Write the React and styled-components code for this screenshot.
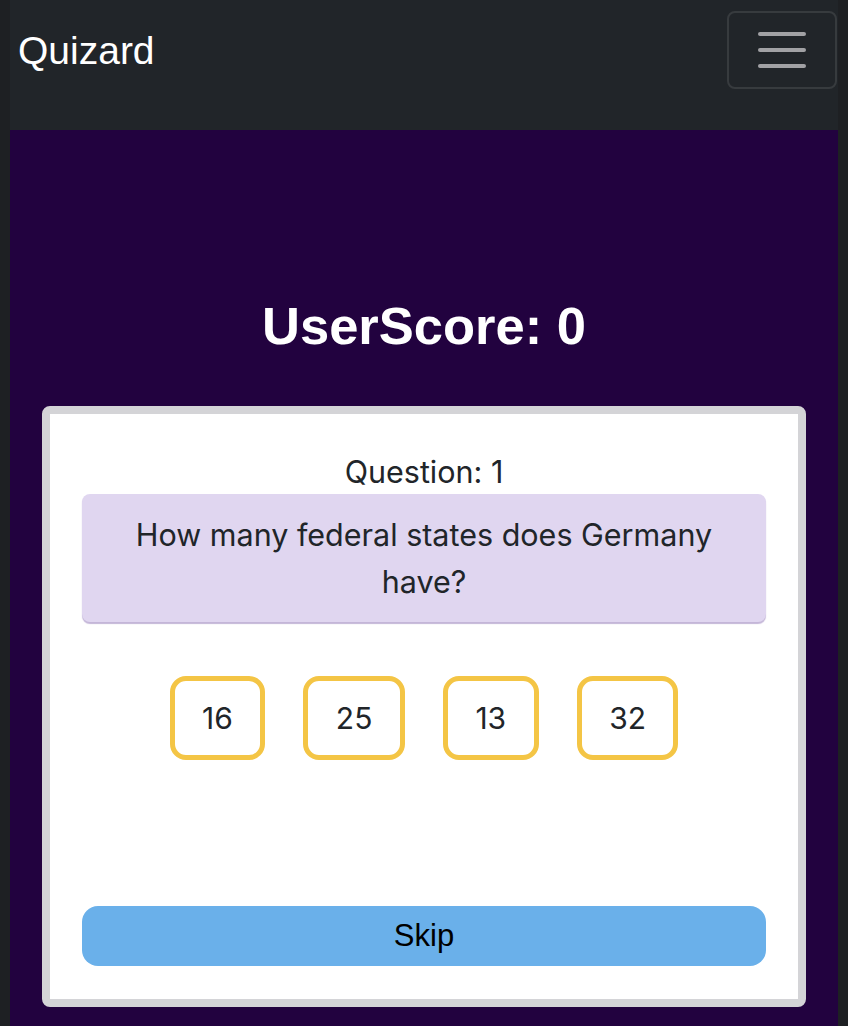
import React from 'react';
import styled, { createGlobalStyle } from 'styled-components';

const GlobalStyle = createGlobalStyle`
  html, body {
    margin: 0;
    padding: 0;
    background-color: #1e2023;
  }
  body {
    font-family: Inter, "Liberation Sans", Arial, sans-serif;
  }
`;

const Page = styled.div`
  margin: 0 10px;
  min-height: 1026px;
  display: flex;
  flex-direction: column;
`;

const Navbar = styled.nav`
  height: 130px;
  background-color: #212529;
  display: flex;
  justify-content: space-between;
  align-items: flex-start;
  padding: 11px 1px 0 8px;
  box-sizing: border-box;
`;

const Brand = styled.a`
  font-family: "Liberation Sans", Arial, sans-serif;
  font-size: 39px;
  line-height: 80px;
  color: #fff;
  text-decoration: none;
`;

const Toggler = styled.button`
  width: 110px;
  height: 78px;
  background: transparent;
  border: 2px solid rgba(255, 255, 255, 0.1);
  border-radius: 8px;
  display: flex;
  align-items: center;
  justify-content: center;
  padding: 0;
`;

const Main = styled.main`
  flex: 1;
  background-color: #22023f;
  padding: 0 32px 21px;
  display: flex;
  flex-direction: column;
  align-items: stretch;
`;

const Score = styled.h2`
  margin: 166px 0 50px;
  text-align: center;
  font-family: "Liberation Sans", Arial, sans-serif;
  font-weight: bold;
  font-size: 52.5px;
  line-height: 60px;
  color: #fff;
`;

const Card = styled.section`
  background-color: #fff;
  border: 8px solid #d4d4d7;
  border-radius: 8px;
  padding: 37px 32px 33px;
  display: flex;
  flex-direction: column;
  color: #212529;
`;

const QuestionNumber = styled.div`
  text-align: center;
  font-size: 30.5px;
  line-height: 42px;
  margin-bottom: 1px;
`;

const QuestionBox = styled.div`
  background-color: #e0d6f0;
  border-radius: 8px;
  box-shadow: 0 2px 1px #c4b6d8;
  padding: 17px 40px;
  text-align: center;
  font-size: 30.5px;
  line-height: 47px;
`;

const Answers = styled.div`
  display: flex;
  justify-content: center;
  gap: 38px;
  margin: 54px 0 146px;
`;

const AnswerButton = styled.button`
  box-sizing: border-box;
  background: #fff;
  border: 5px solid #f4c545;
  border-radius: 16px;
  height: 84px;
  padding: 0 27.5px;
  font-family: Inter, "Liberation Sans", Arial, sans-serif;
  font-size: 30px;
  color: #212529;
`;

const SkipButton = styled.button`
  height: 60px;
  border: none;
  border-radius: 16px;
  background-color: #6ab0ea;
  font-family: "Liberation Sans", Arial, sans-serif;
  font-size: 31px;
  color: #000;
`;

const MenuIcon = () => (
  <svg width="50" height="40" viewBox="0 0 50 40">
    <g stroke="#a1a1a4" strokeWidth="4" strokeLinecap="round">
      <line x1="3" y1="4" x2="47" y2="4" />
      <line x1="3" y1="20" x2="47" y2="20" />
      <line x1="3" y1="36" x2="47" y2="36" />
    </g>
  </svg>
);

const answers = [16, 25, 13, 32];

export default function App() {
  return (
    <>
      <GlobalStyle />
      <Page>
        <Navbar>
          <Brand href="#">Quizard</Brand>
          <Toggler aria-label="Toggle navigation">
            <MenuIcon />
          </Toggler>
        </Navbar>
        <Main>
          <Score>UserScore: 0</Score>
          <Card>
            <QuestionNumber>Question: 1</QuestionNumber>
            <QuestionBox>How many federal states does Germany have?</QuestionBox>
            <Answers>
              {answers.map((a) => (
                <AnswerButton key={a}>{a}</AnswerButton>
              ))}
            </Answers>
            <SkipButton>Skip</SkipButton>
          </Card>
        </Main>
      </Page>
    </>
  );
}
